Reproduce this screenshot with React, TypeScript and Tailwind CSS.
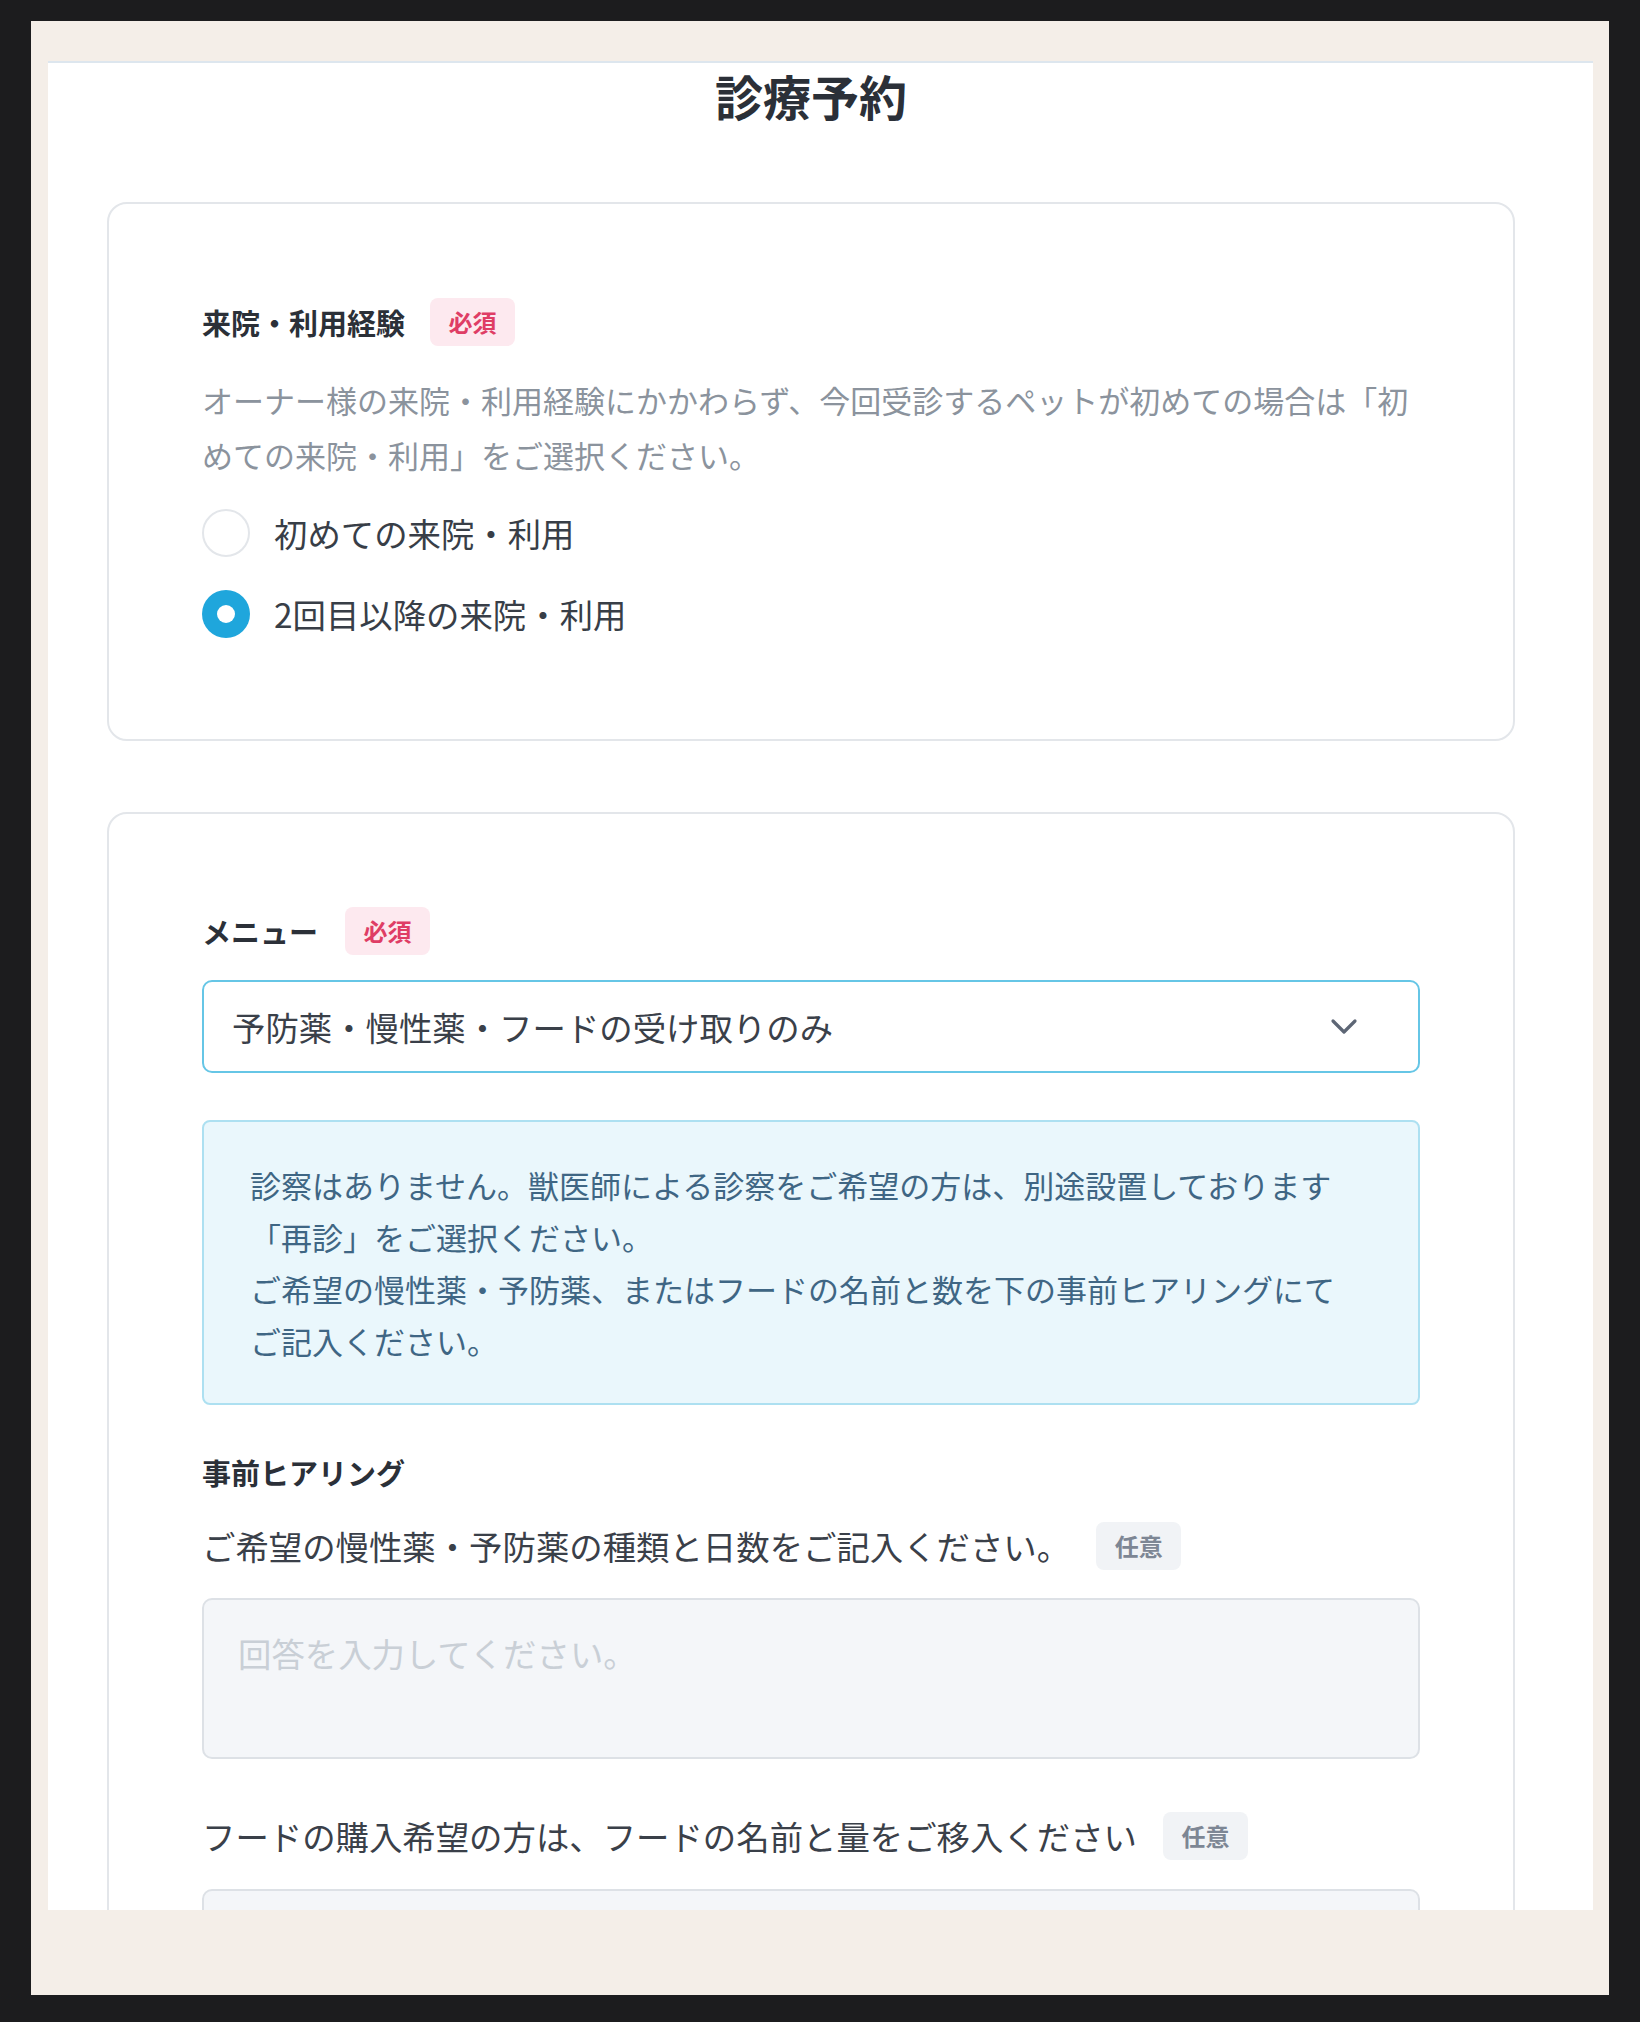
import React from "react";

const FONT = { fontFamily: '"Noto Sans CJK JP", "Noto Sans", sans-serif' };

function Badge({ kind, children }: { kind: "req" | "opt"; children: React.ReactNode }) {
  return (
    <span
      className={
        kind === "req"
          ? "inline-flex h-[48px] w-[85px] items-center justify-center rounded-[8px] bg-[#fde9ef] text-[24px] font-bold leading-none text-[#df3d65]"
          : "inline-flex h-[48px] w-[85px] items-center justify-center rounded-[8px] bg-[#f1f3f6] text-[24px] font-bold leading-none text-[#7d8694]"
      }
    >
      {children}
    </span>
  );
}

function Radio({ checked, label }: { checked: boolean; label: string }) {
  return (
    <div className="flex h-[48px] items-center gap-[24px]">
      {checked ? (
        <span className="flex h-[48px] w-[48px] items-center justify-center rounded-full bg-[#1fa6dc]">
          <span className="h-[18px] w-[18px] rounded-full bg-white" />
        </span>
      ) : (
        <span className="h-[48px] w-[48px] rounded-full border-[2px] border-[#e3e6ea] bg-white" />
      )}
      <span className="whitespace-nowrap text-[33.4px] leading-none text-[#383e47]">{label}</span>
    </div>
  );
}

export default function App() {
  return (
    <div className="h-[2022px] w-[1640px] bg-[#1c1c1e] pb-[27px] pl-[31px] pr-[31px] pt-[21px]" style={FONT}>
      <div className="h-full w-full bg-[#f4eee8] pb-[85px] pl-[17px] pr-[16px] pt-[40px]">
        <div className="h-[1849px] w-full overflow-hidden border-t-[2px] border-[#dde6ee] bg-white">
          <div className="ml-[59px] w-[1408px]">
            <h1 className="pt-[8px] text-center text-[48px] font-bold leading-[48px] text-[#2b3038]">診療予約</h1>

            {/* Card 1 */}
            <div className="mt-[83px] rounded-[20px] border-[2px] border-[#e3e6ea] bg-white px-[93px] pb-[101px] pt-[94px]">
              <div className="flex h-[48px] items-center gap-[25px]">
                <span className="text-[29px] font-bold leading-none text-[#2b3038]">来院・利用経験</span>
                <Badge kind="req">必須</Badge>
              </div>
              <p className="mt-[26px] whitespace-nowrap text-[31px] leading-[55px] text-[#8b939d]">
                オーナー様の来院・利用経験にかかわらず、今回受診するペットが初めての場合は「初
                <br />
                めての来院・利用」をご選択ください。
              </p>
              <div className="mt-[27px] flex flex-col gap-[33px]">
                <Radio checked={false} label="初めての来院・利用" />
                <Radio checked={true} label="2回目以降の来院・利用" />
              </div>
            </div>

            {/* Card 2 */}
            <div className="mt-[71px] rounded-[20px] border-[2px] border-[#e3e6ea] bg-white px-[93px] pb-[98px] pt-[93px]">
              <div className="flex h-[48px] items-center gap-[27px]">
                <span className="text-[29px] font-bold leading-none text-[#2b3038]">メニュー</span>
                <Badge kind="req">必須</Badge>
              </div>

              <div className="mt-[25px] flex h-[93px] items-center justify-between rounded-[10px] border-[2px] border-[#66c6e6] bg-white pl-[28px] pr-[60px]">
                <span className="whitespace-nowrap text-[33.4px] leading-none text-[#3a4049]">予防薬・慢性薬・フードの受け取りのみ</span>
                <svg width="28" height="18" viewBox="0 0 28 18" fill="none">
                  <path d="M3 3 L14 14 L25 3" stroke="#5d6675" strokeWidth="3.2" strokeLinecap="round" strokeLinejoin="round" />
                </svg>
              </div>

              <div className="mt-[47px] rounded-[8px] border-[2px] border-[#ade0f1] bg-[#eaf7fc] pb-[36px] pl-[46px] pr-[20px] pt-[37px] text-[31px] leading-[52px] text-[#3f6684]">
                <p className="whitespace-nowrap">診察はありません。獣医師による診察をご希望の方は、別途設置しております</p>
                <p className="whitespace-nowrap">「再診」をご選択ください。</p>
                <p className="whitespace-nowrap">ご希望の慢性薬・予防薬、またはフードの名前と数を下の事前ヒアリングにて</p>
                <p className="whitespace-nowrap">ご記入ください。</p>
              </div>

              <div className="mt-[47px] flex h-[40px] items-center">
                <span className="text-[29px] font-bold leading-none text-[#2b3038]">事前ヒアリング</span>
              </div>

              <div className="mt-[30px] flex h-[48px] items-center gap-[26px]">
                <span className="whitespace-nowrap text-[33.4px] leading-none text-[#3a4049]">ご希望の慢性薬・予防薬の種類と日数をご記入ください。</span>
                <Badge kind="opt">任意</Badge>
              </div>
              <div className="mt-[28px] h-[161px] rounded-[10px] border-[2px] border-[#dde1e6] bg-[#f4f6f9] pl-[34px] pt-[36px]">
                <span className="text-[33.4px] leading-none text-[#c9cfd6]">回答を入力してください。</span>
              </div>

              <div className="mt-[53px] flex h-[48px] items-center gap-[26px]">
                <span className="whitespace-nowrap text-[33.4px] leading-none text-[#3a4049]">フードの購入希望の方は、フードの名前と量をご移入ください</span>
                <Badge kind="opt">任意</Badge>
              </div>
              <div className="mt-[29px] h-[161px] rounded-[10px] border-[2px] border-[#dde1e6] bg-[#f4f6f9]" />
            </div>
          </div>
        </div>
      </div>
    </div>
  );
}
